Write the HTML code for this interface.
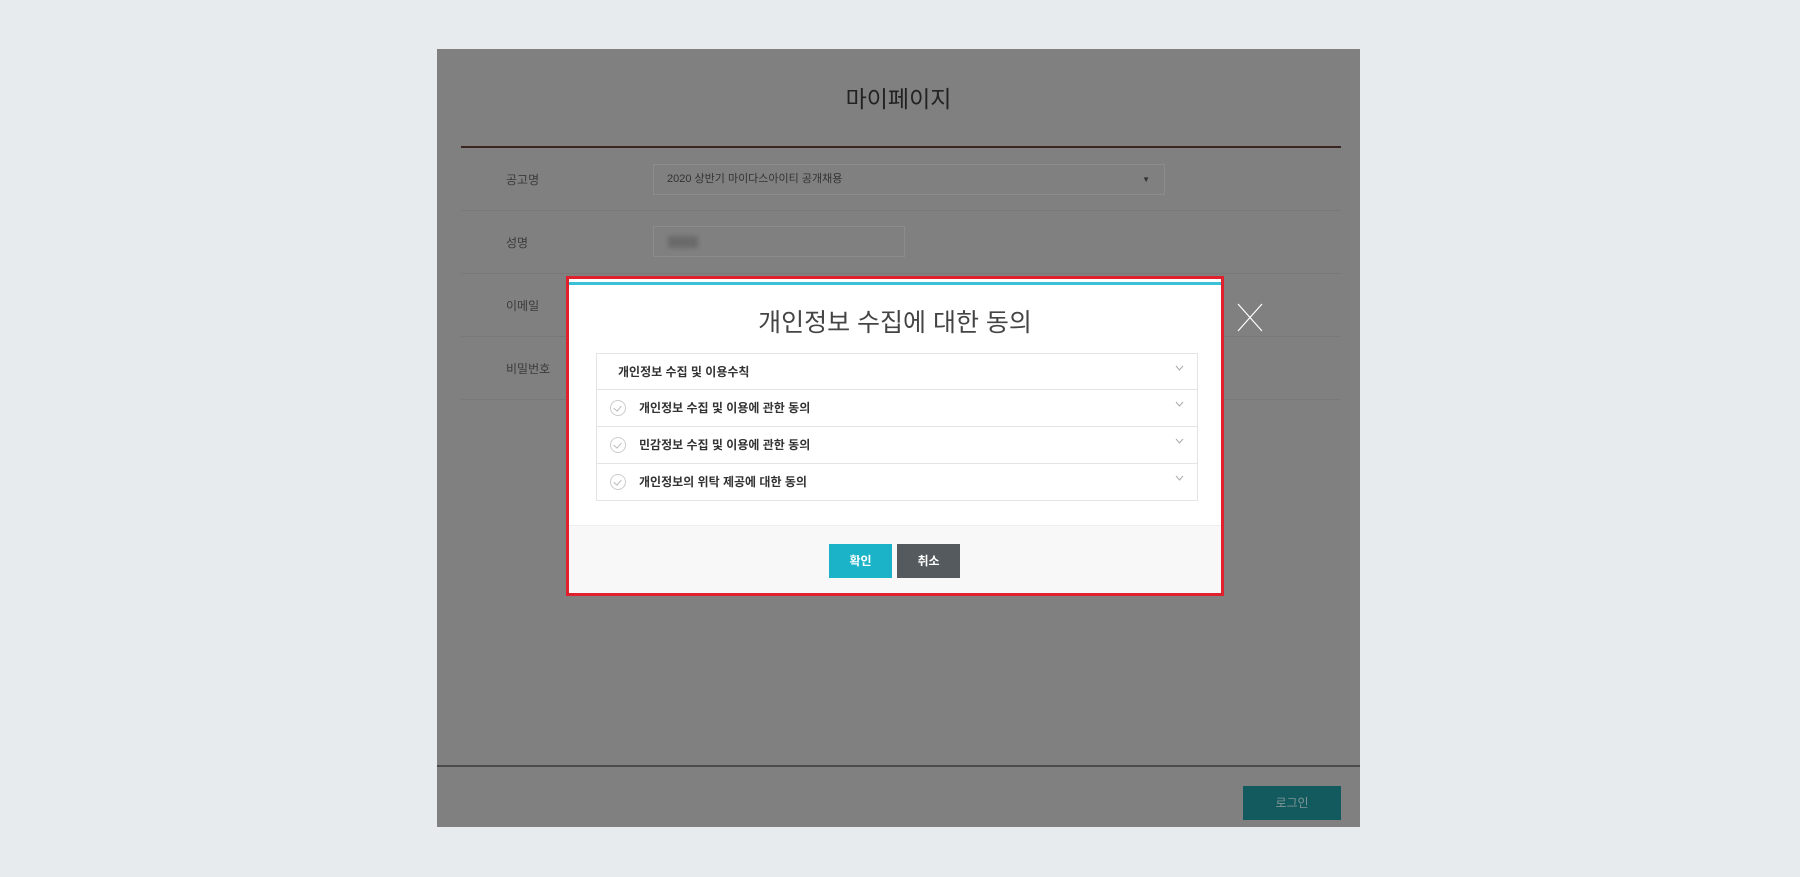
<!DOCTYPE html>
<html><head><meta charset="utf-8"><style>
*{margin:0;padding:0;box-sizing:border-box}
body{width:1800px;height:877px;background:#e8ebee;position:relative;overflow:hidden;font-family:"Liberation Sans","Noto Sans CJK KR",sans-serif}
.a{position:absolute}
.panel{left:437px;top:49px;width:923px;height:778px;background:#808080}
.lbl{color:#3a3a3a;font-size:12px}
.sep{height:1px;background:#787878;left:461px;width:880px}
.modal{left:566px;top:276px;width:658px;height:320px;border:3px solid #e0202c;background:#fff}
.row{position:absolute;left:27px;width:602px;height:37px;border-top:1px solid #e4e4e4;font-size:12px;font-weight:bold;color:#333;line-height:36px}
.chk{position:absolute;left:14px;top:10px;width:16px;height:16px;border:1px solid #ccc;border-radius:50%}
.chk:after{content:"";position:absolute;left:4px;top:3px;width:4px;height:6px;border-right:1px solid #bbb;border-bottom:1px solid #bbb;transform:rotate(40deg)}
.chev{position:absolute;right:14px;top:11px}
</style></head><body>
<div class="a panel"></div>
<div class="a" style="left:437px;width:923px;top:80px;text-align:center;font-size:23px;color:#222">마이페이지</div>
<div class="a" style="left:461px;top:146px;width:880px;height:2px;background:#3b2522"></div>
<div class="a lbl" style="left:506px;top:171px">공고명</div>
<div class="a" style="left:653px;top:164px;width:512px;height:31px;border:1px solid #8c8c8c;font-size:11px;color:#333;line-height:29px;padding-left:13px">2020 상반기 마이다스아이티 공개채용<span style="position:absolute;right:14px;font-size:8px">▼</span></div>
<div class="a sep" style="top:210px"></div>
<div class="a lbl" style="left:506px;top:234px">성명</div>
<div class="a" style="left:653px;top:226px;width:252px;height:31px;border:1px solid #8c8c8c"><div class="a" style="left:14px;top:9px;width:30px;height:12px;background:#6a6a6a;filter:blur(2px)"></div></div>
<div class="a sep" style="top:273px"></div>
<div class="a lbl" style="left:506px;top:297px">이메일</div>
<div class="a sep" style="top:336px"></div>
<div class="a lbl" style="left:506px;top:360px">비밀번호</div>
<div class="a sep" style="top:399px"></div>
<div class="a" style="left:437px;top:765px;width:923px;height:2px;background:#4a4a4a"></div>
<div class="a" style="left:1243px;top:786px;width:98px;height:34px;background:#135a5e;color:#7f9698;font-size:12px;text-align:center;line-height:34px">로그인</div>
<svg class="a" style="left:1236px;top:303px" width="28" height="29"><path d="M2 1L26 28M26 1L2 28" stroke="#fff" stroke-width="1.2" fill="none"/></svg>
<div class="a modal">
 <div class="a" style="left:0;top:3px;width:652px;height:3px;background:#3cc0d6"></div>
 <div class="a" style="left:0;width:652px;top:24px;text-align:center;font-size:25px;color:#444">개인정보 수집에 대한 동의</div>
 <div class="a" style="left:27px;top:74px;width:602px;height:148px;border:1px solid #e4e4e4;border-top:none"></div>
 <div class="row" style="top:74px;padding-left:22px">개인정보 수집 및 이용수칙<svg class="chev" width="9" height="6"><path d="M1 1L4.5 5L8 1" stroke="#aaa" fill="none"/></svg></div>
 <div class="row" style="top:110px;padding-left:43px"><span class="chk"></span>개인정보 수집 및 이용에 관한 동의<svg class="chev" width="9" height="6"><path d="M1 1L4.5 5L8 1" stroke="#aaa" fill="none"/></svg></div>
 <div class="row" style="top:147px;padding-left:43px"><span class="chk"></span>민감정보 수집 및 이용에 관한 동의<svg class="chev" width="9" height="6"><path d="M1 1L4.5 5L8 1" stroke="#aaa" fill="none"/></svg></div>
 <div class="row" style="top:184px;padding-left:43px"><span class="chk"></span>개인정보의 위탁 제공에 대한 동의<svg class="chev" width="9" height="6"><path d="M1 1L4.5 5L8 1" stroke="#aaa" fill="none"/></svg></div>
 <div class="a" style="left:0;top:246px;width:652px;height:68px;background:#f8f8f8;border-top:1px solid #eee"></div>
 <div class="a" style="left:260px;top:265px;width:63px;height:34px;background:#1bb3c8;color:#fff;font-size:12px;font-weight:bold;text-align:center;line-height:34px">확인</div>
 <div class="a" style="left:328px;top:265px;width:63px;height:34px;background:#545a5e;color:#fff;font-size:12px;font-weight:bold;text-align:center;line-height:34px">취소</div>
</div>
</body></html>
